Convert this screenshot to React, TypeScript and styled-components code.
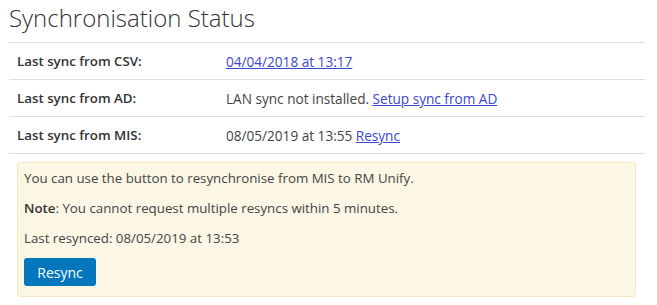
import React from "react";
import styled, { createGlobalStyle } from "styled-components";

const GlobalStyle = createGlobalStyle`
  body {
    margin: 0;
    background: #ffffff;
    font-family: "Open Sans", "Liberation Sans", sans-serif;
    color: #333333;
  }
`;

const Page = styled.div`
  padding: 0 12px 0 9px;
`;

const Title = styled.h1`
  margin: 0;
  padding: 2px 0 0 0;
  height: 40px;
  font-size: 24px;
  font-weight: 300;
  line-height: 32px;
  color: #333333;
`;

const Table = styled.div`
  border-top: 1px solid #dddddd;
`;

const Row = styled.div`
  display: grid;
  grid-template-columns: 209px 1fr;
  height: 36px;
  align-items: center;
  padding-left: 8px;
  border-bottom: 1px solid #dddddd;
  font-size: 13.6px;
`;

const Label = styled.div`
  font-size: 13.3px;
  font-weight: 600;
  color: #333333;
`;

const Value = styled.div`
  color: #444444;
`;

const TextLink = styled.a`
  color: #3b46d1;
  text-decoration: underline;
  cursor: pointer;
`;

const Alert = styled.div`
  margin: 8px 9px 0 8px;
  padding: 0 6px 10px 6px;
  background: #fcf7e4;
  border: 1px solid #f8e6bd;
  border-radius: 3px;
  font-size: 13.3px;
  color: #444444;
`;

const AlertLine = styled.p`
  margin: 0;
  line-height: 30px;
`;

const Strong = styled.span`
  font-weight: 600;
  color: #333333;
`;

const Button = styled.button`
  margin-top: 5px;
  width: 72px;
  height: 28px;
  border: none;
  border-radius: 3px;
  background: #0277bd;
  color: #ffffff;
  font-family: inherit;
  font-size: 14px;
  cursor: pointer;
`;

const rows = [
  { label: "Last sync from CSV:", value: <TextLink>04/04/2018 at 13:17</TextLink> },
  {
    label: "Last sync from AD:",
    value: (
      <>
        LAN sync not installed. <TextLink>Setup sync from AD</TextLink>
      </>
    ),
  },
  {
    label: "Last sync from MIS:",
    value: (
      <>
        08/05/2019 at 13:55 <TextLink>Resync</TextLink>
      </>
    ),
  },
];

const App = () => (
  <>
    <GlobalStyle />
    <Page>
      <Title>Synchronisation Status</Title>
      <Table>
        {rows.map((r) => (
          <Row key={r.label}>
            <Label>{r.label}</Label>
            <Value>{r.value}</Value>
          </Row>
        ))}
      </Table>
      <Alert>
        <AlertLine>You can use the button to resynchronise from MIS to RM Unify.</AlertLine>
        <AlertLine>
          <Strong>Note</Strong>: You cannot request multiple resyncs within 5 minutes.
        </AlertLine>
        <AlertLine>Last resynced: 08/05/2019 at 13:53</AlertLine>
        <Button>Resync</Button>
      </Alert>
    </Page>
  </>
);

export default App;
